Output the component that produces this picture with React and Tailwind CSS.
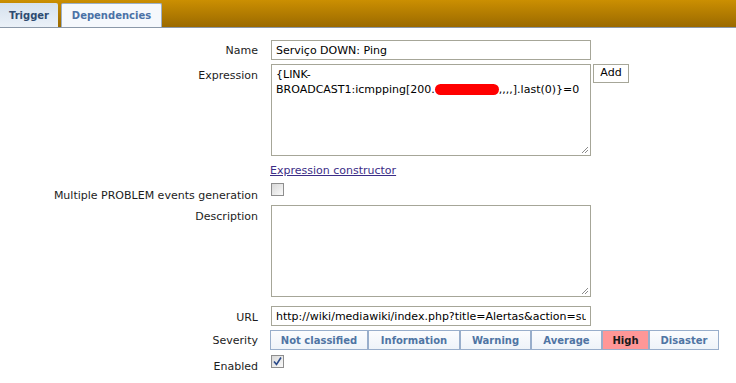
import { useState } from 'react'

const font = { fontFamily: '"DejaVu Sans", Verdana, sans-serif' }

const severities = [
  { name: 'Not classified', w: 'w-[98px]' },
  { name: 'Information', w: 'w-[92px]' },
  { name: 'Warning', w: 'w-[71px]' },
  { name: 'Average', w: 'w-[71px]' },
  { name: 'High', w: 'w-[47px]' },
  { name: 'Disaster', w: 'w-[70px]' },
]

function Grip() {
  return (
    <svg className="absolute right-[1px] bottom-[1px]" width="9" height="9" viewBox="0 0 9 9">
      <path d="M8 2 L2 8 M8 5 L5 8" stroke="#8a8a8a" strokeWidth="1" />
    </svg>
  )
}

function Label({ children, pt = 'pt-0' }) {
  return <div className={`w-[258px] shrink-0 text-right text-[11px] leading-[14px] text-[#1c1c1c] whitespace-nowrap ${pt}`}>{children}</div>
}

export default function App() {
  const [sev, setSev] = useState('High')
  const [enabled, setEnabled] = useState(true)
  const [multi, setMulti] = useState(false)

  return (
    <div className="w-[736px] h-[383px] bg-white overflow-hidden" style={font}>
      {/* tab bar */}
      <div className="h-[28px] flex items-end gap-[3px] border-b border-[#8b98a8] bg-gradient-to-b from-[#cb8f02] to-[#9b6a00]">
        <div className="h-[24px] w-[58px] flex items-center justify-center text-[10px] font-bold text-[#2e4b70] bg-gradient-to-b from-[#d5e1ee] to-[#ebf1f8] rounded-tr-[2px]">
          Trigger
        </div>
        <div className="h-[24px] w-[101px] flex items-center justify-center text-[10px] font-bold text-[#4b72a6] bg-[#f5f8fc] border border-b-0 border-[#9cb0c8] rounded-t-[2px]">
          Dependencies
        </div>
      </div>

      <div className="flex flex-col">
        {/* Name */}
        <div className="flex items-start h-[20px] mt-[12px] gap-[13px]">
          <Label pt="pt-[4px]">Name</Label>
          <input
            defaultValue="Serviço DOWN: Ping"
            className="w-[320px] h-[20px] border border-[#a6a698] px-[4px] text-[11px] text-black outline-none"
            style={font}
          />
        </div>

        {/* Expression */}
        <div className="flex items-start h-[92px] mt-[4px] gap-[13px]">
          <Label pt="pt-[5px]">Expression</Label>
          <div className="relative w-[320px] h-[92px] border border-[#a6a698] px-[4px] pt-[2px] text-[11px] leading-[15px] text-black">
            <div>{'{LINK-'}</div>
            <div className="whitespace-nowrap">
              BROADCAST1:icmpping[200.
              <span className="inline-block align-middle w-[64px] h-[11px] rounded-full bg-[#ff0000] -mt-[2px]"></span>
              ,,,,].last(0)}=0
            </div>
            <Grip />
          </div>
          <button className="-ml-[11px] h-[19px] w-[36px] border border-[#a6a698] bg-white text-[11px] text-black" style={font}>
            Add
          </button>
        </div>

        {/* Expression constructor */}
        <div className="flex h-[14px] mt-[8px] gap-[12px]">
          <div className="w-[258px] shrink-0"></div>
          <a href="#" className="text-[11px] leading-[14px] text-[#3b2d86] underline">Expression constructor</a>
        </div>

        {/* Multiple PROBLEM */}
        <div className="flex items-start h-[13px] mt-[5px] gap-[13px]">
          <Label pt="pt-[6px]">Multiple PROBLEM events generation</Label>
          <button
            onClick={() => setMulti(!multi)}
            className="w-[13px] h-[13px] border border-[#8e8e8e] bg-gradient-to-br from-[#d8d8d8] to-[#fafafa] flex items-center justify-center"
          >
            {multi && <span className="text-[9px] text-[#21407c]">✓</span>}
          </button>
        </div>

        {/* Description */}
        <div className="flex items-start h-[92px] mt-[9px] gap-[13px]">
          <Label pt="pt-[5px]">Description</Label>
          <div className="relative w-[320px] h-[92px] border border-[#a6a698]">
            <Grip />
          </div>
        </div>

        {/* URL */}
        <div className="flex items-start h-[20px] mt-[9px] gap-[13px]">
          <Label pt="pt-[5px]">URL</Label>
          <input
            defaultValue="http://wiki/mediawiki/index.php?title=Alertas&action=submit"
            className="w-[320px] h-[20px] border border-[#a6a698] px-[4px] text-[11px] text-black outline-none"
            style={font}
          />
        </div>

        {/* Severity */}
        <div className="flex items-start h-[20px] mt-[4px] gap-[12px]">
          <Label pt="pt-[4px]">Severity</Label>
          <div className="flex">
            {severities.map(s => (
              <button
                key={s.name}
                onClick={() => setSev(s.name)}
                className={`${s.w} h-[20px] border border-[#98aecb] text-[10px] font-bold ${
                  sev === s.name
                    ? 'bg-[#ff9797] text-[#1a1a1a]'
                    : 'bg-gradient-to-b from-[#fbfcfe] to-[#eef3f9] text-[#4f74a3]'
                }`}
                style={font}
              >
                {s.name}
              </button>
            ))}
          </div>
        </div>

        {/* Enabled */}
        <div className="flex items-start h-[13px] mt-[5px] gap-[13px]">
          <Label pt="pt-[5px]">Enabled</Label>
          <button
            onClick={() => setEnabled(!enabled)}
            className="w-[13px] h-[13px] border border-[#8e8e8e] bg-gradient-to-br from-[#d8d8d8] to-[#fafafa] flex items-center justify-center"
          >
            {enabled && (
              <svg width="9" height="9" viewBox="0 0 9 9">
                <path d="M1 4.5 L3.5 7.5 L8 0.5" stroke="#2b4a8a" strokeWidth="1.6" fill="none" />
              </svg>
            )}
          </button>
        </div>
      </div>
    </div>
  )
}
